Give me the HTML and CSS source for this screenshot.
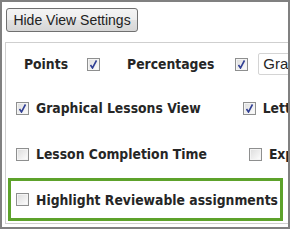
FILE: index.html
```html
<!DOCTYPE html>
<html lang="en">

<head>
    <meta charset="UTF-8">
    <title>View Settings</title>
    <link rel="stylesheet" href="styles.css">
</head>

<body>
    <div class="view_box">
        <button class="view_toggle" type="button">Hide View Settings</button>
        <div class="view_panel">
            <div class="view_row view_row_first">
                <span class="view_label">Points</span>
                <span class="chk chk_on"></span>
                <span class="view_label view_label_gap">Percentages</span>
                <span class="chk chk_on"></span>
                <span class="view_select">Grade</span>
            </div>
            <div class="view_row">
                <span class="chk chk_on"></span>
                <span class="view_label">Graphical Lessons View</span>
                <span class="chk chk_on chk_gap"></span>
                <span class="view_label">Letter Grades</span>
            </div>
            <div class="view_row">
                <span class="chk"></span>
                <span class="view_label">Lesson Completion Time</span>
                <span class="chk chk_gap"></span>
                <span class="view_label">Expand All</span>
            </div>
            <div class="view_row view_row_hl">
                <span class="chk"></span>
                <span class="view_label">Highlight Reviewable assignments</span>
            </div>
        </div>
    </div>
</body>

</html>
```

FILE: styles.css
```css
html, body {
    margin: 0;
    padding: 0;
    background: #fff;
}

.view_box {
    width: 286px;
    height: 225px;
    border: 2px solid #808080;
    overflow: hidden;
    font-family: "DejaVu Sans Condensed", "DejaVu Sans", sans-serif;
    font-stretch: condensed;
    color: #262626;
}

.view_toggle {
    display: block;
    margin: 6px 0 0 4px;
    width: 132px;
    height: 24px;
    padding: 0;
    font-family: "Liberation Sans", Arial, sans-serif;
    font-size: 14px;
    color: #222;
    border: 1px solid #707070;
    border-radius: 3px;
    background: linear-gradient(#f4f4f4 0%, #ededed 50%, #e1e1e1 51%, #d6d6d6 100%);
}

.view_panel {
    box-sizing: border-box;
    margin: 10px 0 0 3px;
    width: 400px;
    height: 182px;
    border: 1px solid #cfcfcf;
    border-right: 0;
    padding: 0 0 0 10px;
}

.view_row {
    display: flex;
    align-items: center;
    height: 46px;
    white-space: nowrap;
    font-size: 13.8px;
    font-weight: bold;
}

.view_row_first {
    height: 42px;
    padding: 0 0 0 8px;
}

.view_label {
    margin-left: 7px;
}

.view_row_first .view_label {
    margin-left: 0;
    margin-right: 19px;
}

.view_row_first .view_label_gap {
    margin-left: 27px;
    margin-right: 21px;
}

.chk {
    position: relative;
    box-sizing: border-box;
    width: 13px;
    height: 13px;
    flex: none;
    border: 1px solid #8e8f8f;
    background: linear-gradient(135deg, #dcdcdc 0%, #f0f0f0 60%, #ffffff 100%);
    box-shadow: inset 0 0 0 1px #f4f4f4;
}

.chk_on::after {
    content: "";
    position: absolute;
    left: 2px;
    top: 1px;
    width: 7px;
    height: 9px;
    background: url("data:image/svg+xml;utf8,<svg xmlns='http://www.w3.org/2000/svg' width='7' height='9' viewBox='0 0 7 9'><path d='M0.5 5 L2.5 8 L6.5 0.5' fill='none' stroke='%23303f94' stroke-width='1.6'/></svg>") no-repeat;
}

.chk_gap {
    margin-left: 42px;
}

.view_select {
    margin-left: 10px;
    padding: 1px 4px;
    height: 18px;
    line-height: 18px;
    border: 1px solid #d4d4d4;
    border-radius: 2px;
    font-family: "Liberation Sans", Arial, sans-serif;
    font-size: 15px;
    font-weight: normal;
}

.view_row_hl {
    box-sizing: border-box;
    margin: 1px 0 0 -8px;
    width: 275px;
    height: 43px;
    padding-left: 5px;
    border: 3px solid #5da22b;
}
```
